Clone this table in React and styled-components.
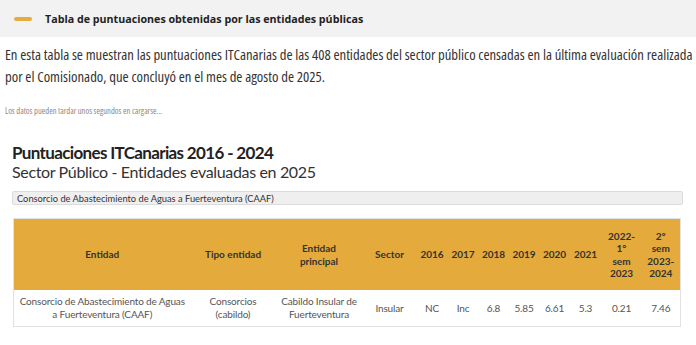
import React from 'react';
import styled, { createGlobalStyle } from 'styled-components';

const GlobalStyle = createGlobalStyle`
  body {
    margin: 0;
    background: #fff;
    font-family: "Open Sans", sans-serif;
  }
`;

const Page = styled.div`
  width: 696px;
`;

const HeaderBar = styled.div`
  height: 37px;
  background: #f2f2f2;
  display: flex;
  align-items: center;
  gap: 13px;
  padding-left: 14px;
`;

const Dash = styled.span`
  width: 18px;
  height: 4px;
  border-radius: 2px;
  background: #e6ad3e;
`;

const HeaderTitle = styled.h2`
  margin: 0;
  font-size: 10.7px;
  font-weight: 700;
  color: #222;
`;

const Intro = styled.p`
  margin: 6px 0 0;
  padding: 0 2px 0 5px;
  font-size: 14.7px;
  line-height: 22px;
  font-stretch: 75%;
  color: #333;
`;

const Note = styled.p`
  margin: 18px 0 0;
  padding: 0 5px;
  font-size: 8.5px;
  font-stretch: 75%;
  color: #888;
`;

const Chart = styled.div`
  margin-top: 27px;
  padding: 0 13px 0 12px;
  font-family: "Lato", sans-serif;
`;

const ChartTitle = styled.h3`
  margin: 0;
  font-size: 17px;
  line-height: 19px;
  font-weight: 700;
  letter-spacing: -0.65px;
  color: #222;
`;

const ChartSubtitle = styled.div`
  font-size: 16px;
  line-height: 19px;
  letter-spacing: -0.35px;
  color: #333;
`;

const Select = styled.div`
  margin-top: 10px;
  height: 12px;
  display: flex;
  align-items: center;
  padding: 0 4px;
  font-size: 9.3px;
  color: #333;
  background: #efefef;
  border: 1px solid #dcdcdc;
  border-radius: 2px;
`;

const Table = styled.table`
  margin-top: 13px;
  margin-left: 1px;
  width: 667px;
  border-collapse: collapse;
  table-layout: fixed;
  border: 1px solid #e2e2e2;
`;

const Th = styled.th`
  background: #e4aa3b;
  color: #333;
  font-size: 10px;
  font-weight: 700;
  line-height: 12.5px;
  height: 71px;
  padding: 0 2px;
  text-align: center;
`;

const Td = styled.td`
  color: #555;
  font-size: 10px;
  line-height: 13px;
  letter-spacing: -0.15px;
  height: 36px;
  padding: 0 2px;
  text-align: center;
  background: #fff;
`;

const columns = [
  { label: 'Entidad', width: 177 },
  { label: 'Tipo entidad', width: 85 },
  { label: <>Entidad<br />principal</>, width: 87 },
  { label: 'Sector', width: 54 },
  { label: '2016', width: 31 },
  { label: '2017', width: 31 },
  { label: '2018', width: 30 },
  { label: '2019', width: 31 },
  { label: '2020', width: 30 },
  { label: '2021', width: 32 },
  { label: <>2022-<br />1°<br />sem<br />2023</>, width: 40 },
  { label: <>2°<br />sem<br />2023-<br />2024</>, width: 39 },
];

const row = [
  <>Consorcio de Abastecimiento de Aguas<br />a Fuerteventura (CAAF)</>,
  <>Consorcios<br />(cabildo)</>,
  <>Cabildo Insular de<br />Fuerteventura</>,
  'Insular', 'NC', 'Inc', '6.8', '5.85', '6.61', '5.3', '0.21', '7.46',
];

export default function App() {
  return (
    <Page>
      <GlobalStyle />
      <HeaderBar>
        <Dash />
        <HeaderTitle>Tabla de puntuaciones obtenidas por las entidades públicas</HeaderTitle>
      </HeaderBar>
      <Intro>
        En esta tabla se muestran las puntuaciones ITCanarias de las 408 entidades del sector público censadas en la última evaluación realizada por el Comisionado, que concluyó en el mes de agosto de 2025.
      </Intro>
      <Note>Los datos pueden tardar unos segundos en cargarse...</Note>
      <Chart>
        <ChartTitle>Puntuaciones ITCanarias 2016 - 2024</ChartTitle>
        <ChartSubtitle>Sector Público - Entidades evaluadas en 2025</ChartSubtitle>
        <Select>Consorcio de Abastecimiento de Aguas a Fuerteventura (CAAF)</Select>
        <Table>
          <colgroup>
            {columns.map((c, i) => <col key={i} style={{ width: c.width }} />)}
          </colgroup>
          <thead>
            <tr>
              {columns.map((c, i) => <Th key={i}>{c.label}</Th>)}
            </tr>
          </thead>
          <tbody>
            <tr>
              {row.map((v, i) => <Td key={i}>{v}</Td>)}
            </tr>
          </tbody>
        </Table>
      </Chart>
    </Page>
  );
}
